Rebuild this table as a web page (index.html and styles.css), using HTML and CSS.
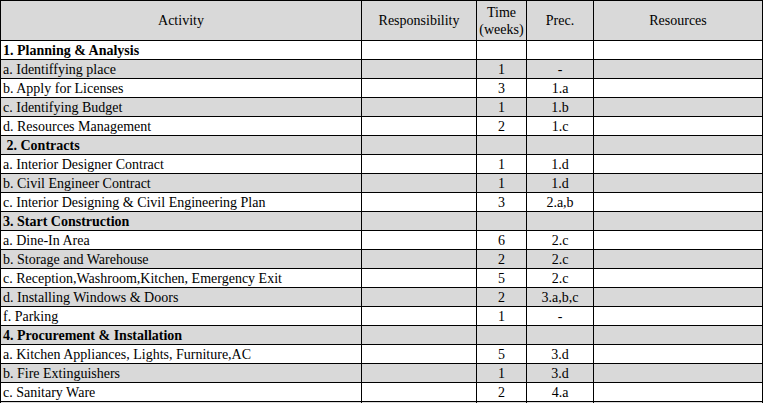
FILE: index.html
```html
<!DOCTYPE html>
<html>
<head>
<meta charset="utf-8">
<link rel="stylesheet" href="styles.css">
</head>
<body>
<table class="sheet">
  <colgroup>
    <col class="c-act"><col class="c-resp"><col class="c-time"><col class="c-prec"><col class="c-res">
  </colgroup>
  <thead>
    <tr class="head">
      <th>Activity</th><th>Responsibility</th><th class="time">Time (weeks)</th><th>Prec.</th><th>Resources</th>
    </tr>
  </thead>
  <tbody>
    <tr class="w sec"><td>1. Planning &amp; Analysis</td><td></td><td></td><td></td><td></td></tr>
    <tr class="g"><td>a. Identiffying place</td><td></td><td class="n">1</td><td class="n">-</td><td></td></tr>
    <tr class="w"><td>b. Apply for Licenses</td><td></td><td class="n">3</td><td class="n">1.a</td><td></td></tr>
    <tr class="g"><td>c. Identifying Budget</td><td></td><td class="n">1</td><td class="n">1.b</td><td></td></tr>
    <tr class="w"><td>d. Resources Management</td><td></td><td class="n">2</td><td class="n">1.c</td><td></td></tr>
    <tr class="g sec"><td>&nbsp;2. Contracts</td><td></td><td></td><td></td><td></td></tr>
    <tr class="w"><td>a. Interior Designer Contract</td><td></td><td class="n">1</td><td class="n">1.d</td><td></td></tr>
    <tr class="g"><td>b. Civil Engineer Contract</td><td></td><td class="n">1</td><td class="n">1.d</td><td></td></tr>
    <tr class="w"><td>c. Interior Designing &amp; Civil Engineering Plan</td><td></td><td class="n">3</td><td class="n">2.a,b</td><td></td></tr>
    <tr class="g sec"><td>3. Start Construction</td><td></td><td></td><td></td><td></td></tr>
    <tr class="w"><td>a. Dine-In Area</td><td></td><td class="n">6</td><td class="n">2.c</td><td></td></tr>
    <tr class="g"><td>b. Storage and Warehouse</td><td></td><td class="n">2</td><td class="n">2.c</td><td></td></tr>
    <tr class="w"><td>c. Reception,Washroom,Kitchen, Emergency Exit</td><td></td><td class="n">5</td><td class="n">2.c</td><td></td></tr>
    <tr class="g"><td>d. Installing Windows &amp; Doors</td><td></td><td class="n">2</td><td class="n">3.a,b,c</td><td></td></tr>
    <tr class="w"><td>f. Parking</td><td></td><td class="n">1</td><td class="n">-</td><td></td></tr>
    <tr class="g sec"><td>4. Procurement &amp; Installation</td><td></td><td></td><td></td><td></td></tr>
    <tr class="w"><td>a. Kitchen Appliances, Lights, Furniture,AC</td><td></td><td class="n">5</td><td class="n">3.d</td><td></td></tr>
    <tr class="g"><td>b. Fire Extinguishers</td><td></td><td class="n">1</td><td class="n">3.d</td><td></td></tr>
    <tr class="w"><td>c. Sanitary Ware</td><td></td><td class="n">2</td><td class="n">4.a</td><td></td></tr>
    <tr class="g"><td></td><td></td><td></td><td></td><td></td></tr>
  </tbody>
</table>
</body>
</html>
```
FILE: styles.css
```css
html, body {
  margin: 0;
  padding: 0;
  background: #ffffff;
  overflow: hidden;
}

.sheet {
  table-layout: fixed;
  width: 763px;
  border-collapse: separate;
  border-spacing: 1px;
  background: #000000;
  font-family: "Liberation Serif", "Times New Roman", serif;
  font-size: 14px;
  color: #000000;
}

.c-act { width: 360px; }
.c-resp { width: 114px; }
.c-time { width: 49px; }
.c-prec { width: 66px; }
.c-res { width: 168px; }

.sheet th,
.sheet td {
  padding: 0 0 0 2px;
  overflow: hidden;
  white-space: nowrap;
}

.head th {
  height: 38px;
  background: #d9d9d9;
  font-weight: normal;
  text-align: center;
  vertical-align: middle;
  line-height: 16px;
  padding: 0;
}

.head th.time {
  white-space: normal;
  line-height: 17px;
  padding-top: 1px;
  word-break: keep-all;
}

.sheet tbody tr {
  height: 18px;
}

.sheet tbody td {
  height: 18px;
  line-height: 16px;
  vertical-align: bottom;
  padding-bottom: 0;
}

.w td { background: #ffffff; }
.g td { background: #d9d9d9; }

.sec td { font-weight: bold; white-space: pre; }

.sheet td.n {
  text-align: center;
  padding: 0;
}
```
